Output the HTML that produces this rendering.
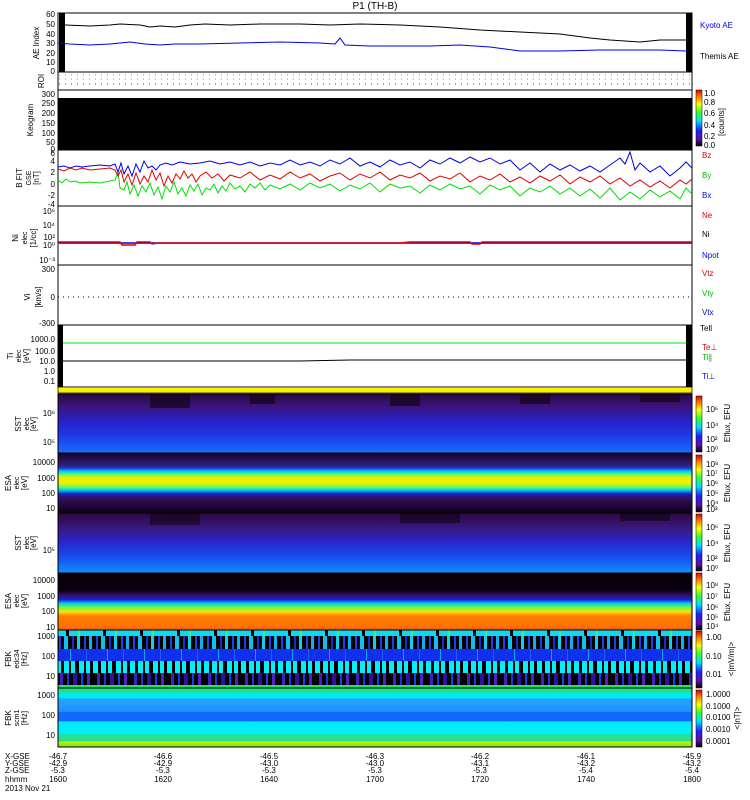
<!DOCTYPE html>
<html><head><meta charset="utf-8"><style>
html,body{margin:0;padding:0;background:#fff;}
svg{display:block;font-family:"Liberation Sans",sans-serif;}
</style></head><body>
<svg width="750" height="800" viewBox="0 0 750 800" xmlns="http://www.w3.org/2000/svg">
<defs>
<linearGradient id="sst1" x1="0" y1="0" x2="0" y2="1">
<stop offset="0" stop-color="#2a0848"/><stop offset="0.2" stop-color="#3a1478"/><stop offset="0.45" stop-color="#2a20c8"/><stop offset="0.7" stop-color="#2038e8"/><stop offset="1" stop-color="#1870ff"/></linearGradient>
<linearGradient id="esa1" x1="0" y1="0" x2="0" y2="1">
<stop offset="0" stop-color="#1a0030"/><stop offset="0.2" stop-color="#302070"/><stop offset="0.25" stop-color="#2030d0"/><stop offset="0.3" stop-color="#00c0ff"/><stop offset="0.35" stop-color="#40ff80"/><stop offset="0.4" stop-color="#e0f000"/><stop offset="0.5" stop-color="#f0f000"/><stop offset="0.58" stop-color="#40ff80"/><stop offset="0.63" stop-color="#00b0ff"/><stop offset="0.68" stop-color="#2020c0"/><stop offset="0.75" stop-color="#301060"/><stop offset="1" stop-color="#100018"/></linearGradient>
<linearGradient id="sst2" x1="0" y1="0" x2="0" y2="1">
<stop offset="0" stop-color="#2a0840"/><stop offset="0.25" stop-color="#3a1880"/><stop offset="0.5" stop-color="#2828d0"/><stop offset="0.75" stop-color="#1850f0"/><stop offset="1" stop-color="#1090ff"/></linearGradient>
<linearGradient id="esa2" x1="0" y1="0" x2="0" y2="1">
<stop offset="0" stop-color="#050008"/><stop offset="0.3" stop-color="#0a0010"/><stop offset="0.38" stop-color="#301060"/><stop offset="0.47" stop-color="#2020d0"/><stop offset="0.53" stop-color="#00c8ff"/><stop offset="0.6" stop-color="#60ff40"/><stop offset="0.68" stop-color="#ffe000"/><stop offset="0.75" stop-color="#ff8000"/><stop offset="0.95" stop-color="#ff7000"/><stop offset="1" stop-color="#ff5000"/></linearGradient>
<linearGradient id="fbk2" x1="0" y1="0" x2="0" y2="1">
<stop offset="0" stop-color="#20e080"/><stop offset="0.07" stop-color="#20e080"/><stop offset="0.08" stop-color="#00e8f0"/><stop offset="0.17" stop-color="#00e8f0"/><stop offset="0.18" stop-color="#20a8ff"/><stop offset="0.4" stop-color="#2090ff"/><stop offset="0.41" stop-color="#1068ff"/><stop offset="0.56" stop-color="#1068ff"/><stop offset="0.57" stop-color="#00e8ff"/><stop offset="0.78" stop-color="#00f0f0"/><stop offset="0.79" stop-color="#20e0a0"/><stop offset="0.9" stop-color="#30e080"/><stop offset="0.91" stop-color="#c0f000"/><stop offset="1" stop-color="#80e020"/></linearGradient>
<linearGradient id="cbr" x1="0" y1="1" x2="0" y2="0">
<stop offset="0" stop-color="#000"/><stop offset="0.12" stop-color="#6010a0"/><stop offset="0.28" stop-color="#2020ff"/><stop offset="0.45" stop-color="#00e0ff"/><stop offset="0.6" stop-color="#30ff30"/><stop offset="0.75" stop-color="#ffff00"/><stop offset="0.88" stop-color="#ff8000"/><stop offset="1" stop-color="#e00000"/></linearGradient>
<pattern id="fbkp" x="58" y="630" width="37" height="58" patternUnits="userSpaceOnUse">
<rect width="37" height="58" fill="#1030f0"/>
<rect y="0" width="37" height="6" fill="#10d8f0"/>
<rect x="8" y="0" width="3" height="6" fill="#000"/><rect x="20" y="0" width="2" height="6" fill="#40f080"/>
<rect y="6" width="37" height="13" fill="#000"/>
<rect x="1" y="6" width="2" height="13" fill="#2040f0"/><rect x="6" y="6" width="4" height="13" fill="#10c0f0"/><rect x="14" y="6" width="2" height="13" fill="#1030d0"/><rect x="19" y="6" width="3" height="13" fill="#10d0f0"/><rect x="26" y="6" width="2" height="13" fill="#2040f0"/><rect x="31" y="6" width="3" height="13" fill="#10b0f0"/>
<rect x="12" y="19" width="1" height="12" fill="#10a0f0"/><rect x="28" y="19" width="1" height="12" fill="#2060f0"/>
<rect y="31" width="37" height="12" fill="#00f0ff"/>
<rect x="3" y="31" width="3" height="12" fill="#000"/><rect x="11" y="31" width="2" height="12" fill="#000"/><rect x="17" y="31" width="4" height="12" fill="#000"/><rect x="26" y="31" width="2" height="12" fill="#000"/><rect x="32" y="31" width="3" height="12" fill="#000"/>
<rect y="43" width="37" height="12" fill="#000"/>
<rect x="2" y="43" width="3" height="12" fill="#4020c0"/><rect x="9" y="43" width="2" height="12" fill="#2030e0"/><rect x="15" y="43" width="4" height="12" fill="#3010a0"/><rect x="23" y="43" width="2" height="12" fill="#1040f0"/><rect x="29" y="43" width="3" height="12" fill="#5020c0"/>
<rect y="55" width="37" height="3" fill="#30e060"/>
</pattern>
</defs>

<text x="375" y="9" font-size="10" text-anchor="middle">P1 (TH-B)</text>

<!-- AE -->
<rect x="58" y="13" width="634" height="59" fill="#fff" stroke="#000"/>
<rect x="59" y="13" width="6" height="59" fill="#000"/>
<rect x="686" y="13" width="6" height="59" fill="#000"/>
<polyline fill="none" stroke="#000" points="65,25 90,26 110,25 120,24 140,25 150,27 160,26 175,27 190,25 205,24 230,25 260,24 300,24 330,25 360,24 400,25 440,27 480,30 520,32 560,34 590,38 610,40 640,42 660,40 686,40"/>
<polyline fill="none" stroke="#0000e0" points="58,43 70,44 90,45 110,44 120,43 130,42 145,44 160,45 175,44 200,44 240,43 280,42 320,43 335,44 340,38 345,45 370,46 400,46 430,46 460,45 490,47 520,51 560,51 600,50 630,50 660,50 686,51"/>
<text x="700" y="28" font-size="8" fill="#0000e0">Kyoto AE</text>
<text x="700" y="59" font-size="8">Themis AE</text>
<text transform="translate(39,43) rotate(-90)" font-size="8" text-anchor="middle">AE Index</text>
<g font-size="8" text-anchor="end"><text x="55" y="17">60</text><text x="55" y="27">50</text><text x="55" y="37">40</text><text x="55" y="46">30</text><text x="55" y="56">20</text><text x="55" y="65">10</text><text x="55" y="74">0</text></g>

<!-- ROI -->
<rect x="58" y="72" width="634" height="18" fill="#fff" stroke="#000"/>
<line x1="59" y1="75" x2="692" y2="75" stroke="#00d8d8" stroke-dasharray="1,5"/>
<line x1="59" y1="79" x2="692" y2="79" stroke="#00e060" stroke-dasharray="1,5"/>
<line x1="59" y1="84" x2="692" y2="84" stroke="#e00000" stroke-dasharray="1,5"/>
<text transform="translate(44,81) rotate(-90)" font-size="8" text-anchor="middle">ROI</text>

<!-- Keogram -->
<rect x="58" y="90" width="634" height="60" fill="#fff" stroke="#000"/>
<rect x="58" y="98" width="634" height="52" fill="#000"/>
<rect x="696" y="90" width="6" height="56" fill="url(#cbr)" stroke="#000" stroke-width="0.5"/>
<g font-size="8"><text x="704" y="96">1.0</text><text x="704" y="105">0.8</text><text x="704" y="116">0.6</text><text x="704" y="128">0.4</text><text x="704" y="139">0.2</text><text x="704" y="148">0.0</text></g>
<text transform="translate(724,122) rotate(-90)" font-size="8" text-anchor="middle">[counts]</text>
<text transform="translate(33,120) rotate(-90)" font-size="8" text-anchor="middle">Keogram</text>
<g font-size="8" text-anchor="end"><text x="55" y="97">300</text><text x="55" y="106">250</text><text x="55" y="116">200</text><text x="55" y="126">150</text><text x="55" y="136">100</text><text x="55" y="145">50</text><text x="55" y="152">0</text></g>

<!-- B FIT -->
<rect x="58" y="150" width="634" height="56" fill="#fff" stroke="#000"/>
<polyline fill="none" stroke="#00e000" points="58,180 62,183 66,179 70,182 75,181 80,183 90,182 100,183 110,181 115,180 118,172 120,188 124,190 127,182 130,194 134,185 138,196 142,186 146,192 150,183 154,195 158,187 162,199 166,186 170,192 174,182 178,194 182,188 186,196 190,185 194,191 198,184 202,195 206,188 210,190 214,184 218,193 222,186 226,191 230,183 235,189 240,186 245,192 250,184 255,188 260,183 265,190 270,185 280,189 290,184 300,190 310,183 320,188 330,184 340,191 350,185 360,189 370,183 380,192 390,184 400,188 410,186 420,193 430,185 440,190 450,184 460,189 470,186 480,194 490,185 500,190 510,186 520,196 530,188 540,192 550,186 560,194 570,188 580,196 590,189 600,198 610,188 620,200 630,192 640,199 650,190 660,197 670,191 680,199 686,188 692,194"/>
<polyline fill="none" stroke="#e00000" points="58,169 64,171 70,168 76,170 82,168 90,170 100,169 110,168 115,170 118,176 121,170 124,182 128,174 132,185 136,173 140,184 144,176 148,182 152,170 156,180 160,173 164,186 168,176 172,183 176,174 180,179 184,171 188,178 192,174 196,182 200,176 206,172 212,178 218,174 224,181 230,175 240,178 250,172 260,180 270,175 280,179 290,172 300,178 310,174 320,181 330,176 340,173 350,180 360,174 370,178 380,172 390,180 400,175 410,178 420,173 430,181 440,176 450,179 460,173 470,182 480,176 490,180 500,174 510,182 520,177 530,183 540,176 550,181 560,175 570,184 580,177 590,182 600,176 610,184 620,178 630,186 640,180 650,187 660,181 670,188 680,180 686,184 692,179"/>
<polyline fill="none" stroke="#0000e0" points="58,167 64,166 70,168 76,166 82,167 90,166 100,165 110,166 115,164 118,172 121,163 124,174 128,166 132,176 136,164 140,172 144,161 148,168 152,166 156,170 160,165 166,163 172,165 180,162 190,164 200,163 210,161 220,164 230,162 240,165 250,162 260,166 270,163 280,165 290,160 300,165 310,162 320,166 330,160 340,164 350,158 360,166 370,162 380,167 390,160 400,165 410,162 420,168 430,160 440,164 450,158 460,163 470,157 480,162 490,158 500,164 510,160 520,170 530,163 540,172 550,164 560,170 570,165 580,171 590,166 600,172 610,165 620,158 625,164 630,152 635,170 640,163 650,172 660,166 670,176 680,168 686,162 692,168"/>
<text x="702" y="158" font-size="8" fill="#e00000">Bz</text>
<text x="702" y="178" font-size="8" fill="#00c000">By</text>
<text x="702" y="198" font-size="8" fill="#0000e0">Bx</text>
<text transform="translate(22,178) rotate(-90)" font-size="8" text-anchor="middle">B FIT</text>
<text transform="translate(31,178) rotate(-90)" font-size="7" text-anchor="middle">GSE</text>
<text transform="translate(39,178) rotate(-90)" font-size="8" text-anchor="middle">[nT]</text>
<g font-size="8" text-anchor="end"><text x="55" y="156">6</text><text x="55" y="164">4</text><text x="55" y="175">2</text><text x="55" y="187">0</text><text x="55" y="198">-2</text><text x="55" y="207">-4</text></g>

<!-- Ni -->
<rect x="58" y="206" width="634" height="59" fill="#fff" stroke="#000"/>
<line x1="58" y1="243" x2="692" y2="243" stroke="#0000e0" stroke-width="1.5"/>
<polyline fill="none" stroke="#e00000" stroke-width="1.5" points="58,242 120,242 122,245 135,245 137,242 150,242 152,244 158,243 400,243 410,242 470,242 472,244 480,244 482,242 692,242"/>
<text x="702" y="218" font-size="8" fill="#e00000">Ne</text>
<text x="702" y="237" font-size="8">Ni</text>
<text x="702" y="258" font-size="8" fill="#0000e0">Npot</text>
<text transform="translate(18,238) rotate(-90)" font-size="8" text-anchor="middle">Ni</text>
<text transform="translate(27,238) rotate(-90)" font-size="7" text-anchor="middle">elec</text>
<text transform="translate(36,238) rotate(-90)" font-size="8" text-anchor="middle">[1/cc]</text>
<g font-size="8" text-anchor="end"><text x="55" y="214">10⁶</text><text x="55" y="228">10⁴</text><text x="55" y="240">10²</text><text x="55" y="248">10⁰</text><text x="55" y="263">10⁻³</text></g>

<!-- V -->
<rect x="58" y="265" width="634" height="60" fill="#fff" stroke="#000"/>
<line x1="58" y1="297" x2="692" y2="297" stroke="#000" stroke-dasharray="1,4"/>
<text x="702" y="276" font-size="8" fill="#e00000">Vtz</text>
<text x="702" y="296" font-size="8" fill="#00c000">Vty</text>
<text x="702" y="315" font-size="8" fill="#0000e0">Vtx</text>
<text transform="translate(30,297) rotate(-90)" font-size="8" text-anchor="middle">Vi</text>
<text transform="translate(41,297) rotate(-90)" font-size="8" text-anchor="middle">[km/s]</text>
<g font-size="8" text-anchor="end"><text x="55" y="272">300</text><text x="55" y="300">0</text><text x="55" y="326">-300</text></g>

<!-- T -->
<rect x="58" y="325" width="634" height="62" fill="#fff" stroke="#000"/>
<rect x="58" y="325" width="5" height="62" fill="#000"/>
<rect x="686" y="325" width="6" height="62" fill="#000"/>
<line x1="63" y1="343" x2="686" y2="343" stroke="#00e000"/>
<polyline fill="none" stroke="#000" points="63,361 300,361 350,360 650,360 686,360"/>
<text x="700" y="331" font-size="8">Tell</text>
<text x="702" y="350" font-size="8" fill="#e00000">Te⊥</text>
<text x="702" y="360" font-size="8" fill="#00c000">Ti∥</text>
<text x="702" y="379" font-size="8" fill="#0000e0">Ti⊥</text>
<text transform="translate(13,356) rotate(-90)" font-size="8" text-anchor="middle">Ti</text>
<text transform="translate(21,356) rotate(-90)" font-size="7" text-anchor="middle">elec</text>
<text transform="translate(29,356) rotate(-90)" font-size="8" text-anchor="middle">[eV]</text>
<g font-size="8" text-anchor="end"><text x="55" y="342">1000.0</text><text x="55" y="354">100.0</text><text x="55" y="364">10.0</text><text x="55" y="374">1.0</text><text x="55" y="384">0.1</text></g>

<!-- yellow -->
<rect x="58" y="387" width="634" height="6" fill="#f8f000" stroke="#000" stroke-width="0.7"/>

<!-- SST1 -->
<rect x="58" y="394" width="634" height="59" fill="url(#sst1)"/>
<g fill="#140418" opacity="0.7"><rect x="150" y="394" width="40" height="14"/><rect x="390" y="394" width="30" height="12"/><rect x="520" y="394" width="30" height="10"/><rect x="640" y="394" width="40" height="8"/><rect x="250" y="394" width="25" height="10"/></g>
<rect x="58" y="394" width="634" height="59" fill="none" stroke="#000"/>
<text transform="translate(21,424) rotate(-90)" font-size="8" text-anchor="middle">SST</text>
<text transform="translate(29,424) rotate(-90)" font-size="7" text-anchor="middle">elec</text>
<text transform="translate(36,424) rotate(-90)" font-size="8" text-anchor="middle">[eV]</text>
<g font-size="8" text-anchor="end"><text x="55" y="416">10⁶</text><text x="55" y="445">10⁵</text></g>

<!-- ESA1 -->
<rect x="58" y="453" width="634" height="60" fill="url(#esa1)" stroke="#000"/>
<text transform="translate(11,483) rotate(-90)" font-size="8" text-anchor="middle">ESA</text>
<text transform="translate(19,483) rotate(-90)" font-size="7" text-anchor="middle">elec</text>
<text transform="translate(27,483) rotate(-90)" font-size="8" text-anchor="middle">[eV]</text>
<g font-size="8" text-anchor="end"><text x="55" y="465">10000</text><text x="55" y="481">1000</text><text x="55" y="496">100</text><text x="55" y="511">10</text></g>

<!-- SST2 -->
<rect x="58" y="513" width="634" height="60" fill="url(#sst2)"/>
<g fill="#140418" opacity="0.6"><rect x="150" y="513" width="50" height="12"/><rect x="400" y="513" width="60" height="10"/><rect x="620" y="513" width="50" height="8"/></g>
<rect x="58" y="513" width="634" height="60" fill="none" stroke="#000"/>
<text transform="translate(21,543) rotate(-90)" font-size="8" text-anchor="middle">SST</text>
<text transform="translate(29,543) rotate(-90)" font-size="7" text-anchor="middle">elec</text>
<text transform="translate(36,543) rotate(-90)" font-size="8" text-anchor="middle">[eV]</text>
<g font-size="8" text-anchor="end"><text x="55" y="553">10⁵</text></g>

<!-- ESA2 -->
<rect x="58" y="573" width="634" height="57" fill="url(#esa2)" stroke="#000"/>
<text transform="translate(11,601) rotate(-90)" font-size="8" text-anchor="middle">ESA</text>
<text transform="translate(19,601) rotate(-90)" font-size="7" text-anchor="middle">elec</text>
<text transform="translate(27,601) rotate(-90)" font-size="8" text-anchor="middle">[eV]</text>
<g font-size="8" text-anchor="end"><text x="55" y="583">10000</text><text x="55" y="599">1000</text><text x="55" y="614">100</text><text x="55" y="630">10</text></g>

<!-- FBK1 -->
<rect x="58" y="630" width="634" height="58" fill="url(#fbkp)" stroke="#000"/>
<text transform="translate(11,659) rotate(-90)" font-size="8" text-anchor="middle">FBK</text>
<text transform="translate(19,659) rotate(-90)" font-size="7" text-anchor="middle">edc34</text>
<text transform="translate(27,659) rotate(-90)" font-size="8" text-anchor="middle">[Hz]</text>
<g font-size="8" text-anchor="end"><text x="55" y="639">1000</text><text x="55" y="659">100</text><text x="55" y="679">10</text></g>

<!-- FBK2 -->
<rect x="58" y="688" width="634" height="59" fill="url(#fbk2)" stroke="#000"/>
<text transform="translate(11,718) rotate(-90)" font-size="8" text-anchor="middle">FBK</text>
<text transform="translate(19,718) rotate(-90)" font-size="7" text-anchor="middle">scm1</text>
<text transform="translate(27,718) rotate(-90)" font-size="8" text-anchor="middle">[Hz]</text>
<g font-size="8" text-anchor="end"><text x="55" y="698">1000</text><text x="55" y="718">100</text><text x="55" y="738">10</text></g>

<!-- colorbars lower -->
<rect x="696" y="396" width="6" height="56" fill="url(#cbr)" stroke="#000" stroke-width="0.5"/>
<rect x="696" y="455" width="6" height="57" fill="url(#cbr)" stroke="#000" stroke-width="0.5"/>
<rect x="696" y="514" width="6" height="57" fill="url(#cbr)" stroke="#000" stroke-width="0.5"/>
<rect x="696" y="573" width="6" height="57" fill="url(#cbr)" stroke="#000" stroke-width="0.5"/>
<rect x="696" y="631" width="6" height="57" fill="url(#cbr)" stroke="#000" stroke-width="0.5"/>
<rect x="696" y="690" width="6" height="57" fill="url(#cbr)" stroke="#000" stroke-width="0.5"/>
<g font-size="8">
<text x="706" y="412">10⁶</text><text x="706" y="428">10⁴</text><text x="706" y="442">10²</text><text x="706" y="452">10⁰</text>
<text x="706" y="467">10⁸</text><text x="706" y="476">10⁷</text><text x="706" y="486">10⁶</text><text x="706" y="496">10⁵</text><text x="706" y="506">10⁴</text><text x="706" y="512">10³</text>
<text x="706" y="530">10⁶</text><text x="706" y="546">10⁴</text><text x="706" y="561">10²</text><text x="706" y="571">10⁰</text>
<text x="706" y="588">10⁸</text><text x="706" y="599">10⁷</text><text x="706" y="610">10⁶</text><text x="706" y="620">10⁵</text><text x="706" y="629">10⁴</text>
<text x="706" y="640">1.00</text><text x="706" y="659">0.10</text><text x="706" y="677">0.01</text>
<text x="706" y="697">1.0000</text><text x="706" y="709">0.1000</text><text x="706" y="720">0.0100</text><text x="706" y="732">0.0010</text><text x="706" y="744">0.0001</text>
</g>
<g font-size="8" text-anchor="middle">
<text transform="translate(730,423) rotate(-90)">Eflux, EFU</text>
<text transform="translate(730,483) rotate(-90)">Eflux, EFU</text>
<text transform="translate(730,543) rotate(-90)">Eflux, EFU</text>
<text transform="translate(730,602) rotate(-90)">Eflux, EFU</text>
<text transform="translate(734,659) rotate(-90)">&lt;|mV/m|&gt;</text>
<text transform="translate(740,718) rotate(-90)">&lt;|nT|&gt;</text>
</g>

<!-- bottom axis -->
<g font-size="8">
<text x="5" y="759">X-GSE</text><text x="5" y="766">Y-GSE</text><text x="5" y="773">Z-GSE</text><text x="5" y="782">hhmm</text><text x="5" y="791">2013 Nov 21</text>
</g>
<g font-size="8" text-anchor="middle">
<text x="58" y="759">-46.7</text><text x="58" y="766">-42.9</text><text x="58" y="773">-5.3</text><text x="58" y="782">1600</text>
<text x="163" y="759">-46.6</text><text x="163" y="766">-42.9</text><text x="163" y="773">-5.3</text><text x="163" y="782">1620</text>
<text x="269" y="759">-46.5</text><text x="269" y="766">-43.0</text><text x="269" y="773">-5.3</text><text x="269" y="782">1640</text>
<text x="375" y="759">-46.3</text><text x="375" y="766">-43.0</text><text x="375" y="773">-5.3</text><text x="375" y="782">1700</text>
<text x="480" y="759">-46.2</text><text x="480" y="766">-43.1</text><text x="480" y="773">-5.3</text><text x="480" y="782">1720</text>
<text x="586" y="759">-46.1</text><text x="586" y="766">-43.2</text><text x="586" y="773">-5.4</text><text x="586" y="782">1740</text>
<text x="692" y="759">-45.9</text><text x="692" y="766">-43.2</text><text x="692" y="773">-5.4</text><text x="692" y="782">1800</text>
</g>
</svg>
</body></html>
